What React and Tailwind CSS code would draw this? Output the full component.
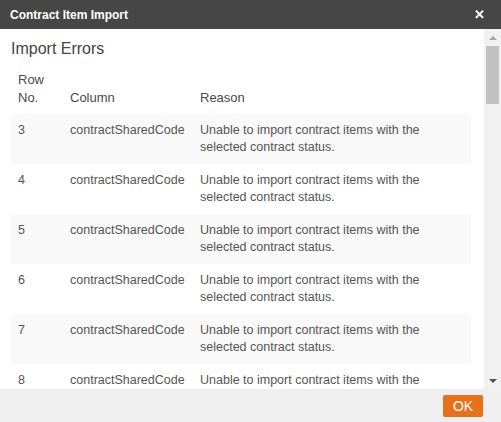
import React from "react";

const rows = [3, 4, 5, 6, 7, 8];

export default function App() {
  return (
    <div
      className="w-[501px] h-[422px] flex flex-col bg-white overflow-hidden"
      style={{ fontFamily: '"Liberation Sans", Arial, sans-serif' }}
    >
      {/* Title bar */}
      <div className="h-[29px] shrink-0 bg-[#464646] flex items-center justify-between pl-[10px] pr-[16px]">
        <span className="text-white text-[12px] font-bold">Contract Item Import</span>
        <span className="text-white text-[13px] font-bold leading-none">✕</span>
      </div>

      {/* Body */}
      <div className="flex-1 flex min-h-0">
        <div className="flex-1 overflow-hidden pl-[11px] pr-[13px] pt-[10px]">
          <h2 className="text-[16px] leading-5 text-[#444] mb-[5px]">Import Errors</h2>
          <table className="w-full table-fixed border-collapse text-[#555]">
            <colgroup>
              <col className="w-[52px]" />
              <col className="w-[130px]" />
              <col />
            </colgroup>
            <thead>
              <tr className="text-[13px] leading-[18px] text-left text-[#4a4a4a]">
                <th className="font-normal px-[7px] py-[7px] align-bottom">Row No.</th>
                <th className="font-normal px-[7px] py-[7px] align-bottom">Column</th>
                <th className="font-normal px-[7px] py-[7px] align-bottom">Reason</th>
              </tr>
            </thead>
            <tbody>
              {rows.map((r, i) => (
                <tr
                  key={r}
                  className={`text-[12.5px] leading-[17px] h-[50px] ${i % 2 === 0 ? "bg-[#f9f9f9]" : "bg-white"}`}
                >
                  <td className="px-[7px] py-[8px] align-top">{r}</td>
                  <td className="px-[7px] py-[8px] align-top whitespace-nowrap">contractSharedCode</td>
                  <td className="px-[7px] py-[8px] align-top">
                    Unable to import contract items with the selected contract status.
                  </td>
                </tr>
              ))}
            </tbody>
          </table>
        </div>

        {/* Scrollbar */}
        <div className="w-[17px] shrink-0 bg-[#f1f1f1] flex flex-col items-center">
          <div className="h-[17px] w-full flex items-center justify-center">
            <div className="w-0 h-0 border-l-[4px] border-r-[4px] border-b-[4px] border-l-transparent border-r-transparent border-b-[#a3a3a3]" />
          </div>
          <div className="w-[13px] h-[58px] bg-[#c1c1c1]" />
          <div className="flex-1" />
          <div className="h-[17px] w-full flex items-center justify-center">
            <div className="w-0 h-0 border-l-[4px] border-r-[4px] border-t-[4px] border-l-transparent border-r-transparent border-t-[#505050]" />
          </div>
        </div>
      </div>

      {/* Footer */}
      <div className="h-[33px] shrink-0 bg-[#efefef] flex items-center justify-end pr-[18px]">
        <button className="w-[40px] h-[22px] bg-[#e8701a] text-white text-[14px] leading-none rounded-[2px]">
          OK
        </button>
      </div>
    </div>
  );
}
